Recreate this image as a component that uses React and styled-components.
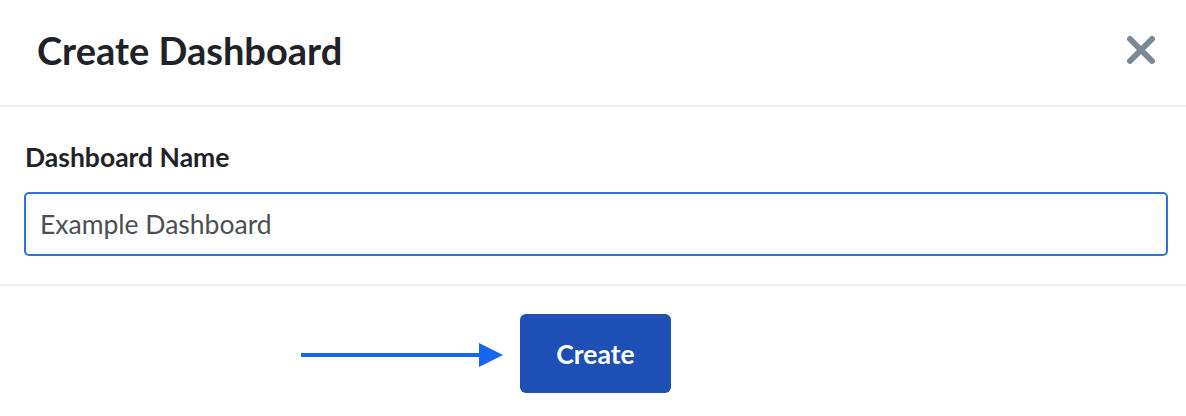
import React from 'react';
import styled, { createGlobalStyle } from 'styled-components';

const GlobalStyle = createGlobalStyle`
  html, body {
    margin: 0;
    padding: 0;
    background: #ffffff;
  }
  body {
    font-family: Lato, "Noto Sans", "Liberation Sans", sans-serif;
    color: #1f2329;
  }
`;

const Modal = styled.div`
  width: 1186px;
  height: 416px;
  background: #ffffff;
  display: flex;
  flex-direction: column;
`;

const Header = styled.header`
  align-items: center;
  border-bottom: 2px solid #eceef2;
  box-sizing: border-box;
  display: flex;
  height: 107px;
  justify-content: space-between;
  padding: 0 30px 6px 37px;
`;

const Title = styled.h1`
  font-size: 38px;
  font-weight: 700;
  margin: 0;
  color: #1f2329;
`;

const Close = styled.button`
  background: none;
  border: 0;
  cursor: pointer;
  display: flex;
  padding: 0;
`;

const Body = styled.section`
  border-bottom: 2px solid #eceef2;
  box-sizing: border-box;
  display: flex;
  flex-direction: column;
  gap: 19px;
  height: 179px;
  padding: 34px 18px 0 24px;
`;

const Label = styled.label`
  font-size: 26.5px;
  font-weight: 700;
  color: #1f2329;
  padding-left: 1px;
`;

const Input = styled.input`
  border: 2px solid #2f6fdf;
  border-radius: 5px;
  box-sizing: border-box;
  color: #4a4f56;
  font-family: inherit;
  font-size: 26.5px;
  height: 64px;
  outline: none;
  padding: 0 14px;
  width: 100%;
`;

const Footer = styled.footer`
  align-items: flex-start;
  display: flex;
  justify-content: center;
  padding: 28px 0 0 5px;
`;

const ButtonWrap = styled.div`
  position: relative;
`;

const Button = styled.button`
  background: #1e4fb4;
  border: 0;
  border-radius: 6px;
  color: #ffffff;
  cursor: pointer;
  font-family: inherit;
  font-size: 26.5px;
  font-weight: 700;
  height: 79px;
  width: 151px;
`;

const Pointer = styled.svg`
  left: -219px;
  position: absolute;
  top: 29px;
`;

const CloseIcon = () => (
  <svg width="30" height="30" viewBox="0 0 30 30">
    <path d="M4 4 L26 26 M26 4 L4 26" stroke="#7b8896" strokeWidth="6" strokeLinecap="round" />
  </svg>
);

const Arrow = () => (
  <Pointer width="202" height="24" viewBox="0 0 202 24">
    <rect x="0" y="10" width="180" height="4" fill="#1766f0" />
    <polygon points="178,0 202,12 178,24" fill="#1766f0" />
  </Pointer>
);

const App = () => (
  <>
    <GlobalStyle />
    <Modal>
      <Header>
        <Title>Create Dashboard</Title>
        <Close aria-label="Close">
          <CloseIcon />
        </Close>
      </Header>
      <Body>
        <Label htmlFor="dashboard-name">Dashboard Name</Label>
        <Input id="dashboard-name" defaultValue="Example Dashboard" />
      </Body>
      <Footer>
        <ButtonWrap>
          <Arrow />
          <Button>Create</Button>
        </ButtonWrap>
      </Footer>
    </Modal>
  </>
);

export default App;
